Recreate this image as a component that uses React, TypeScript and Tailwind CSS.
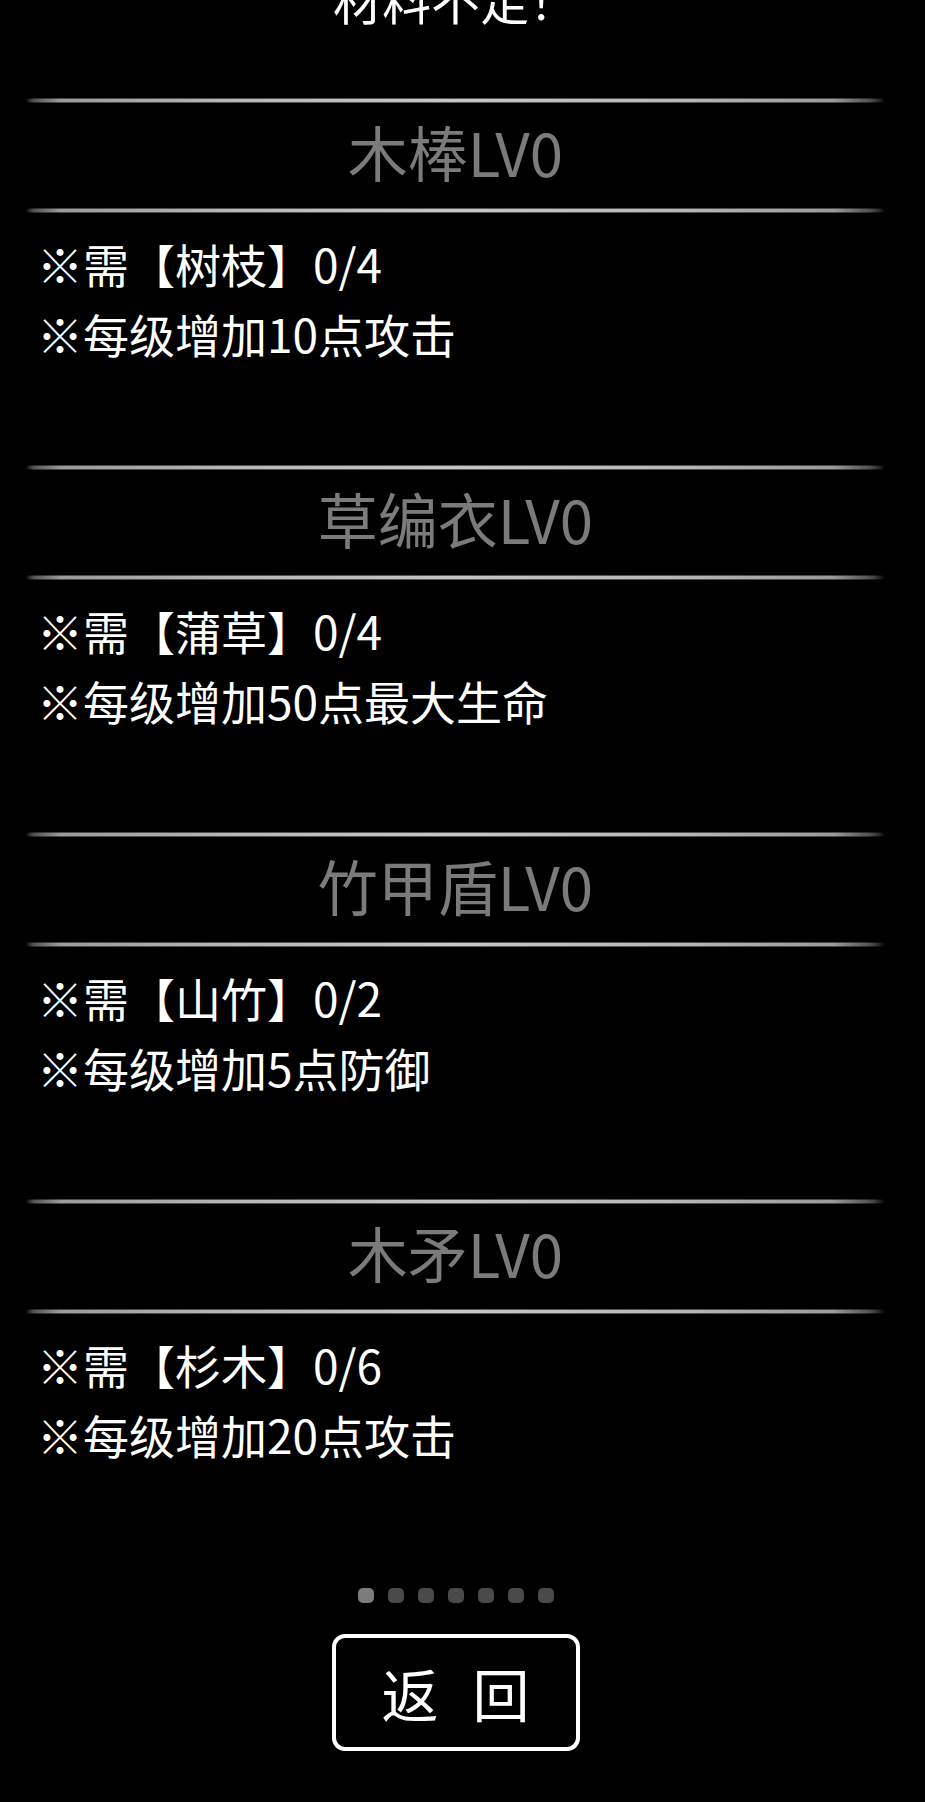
import React from 'react'

const items = [
  { name: '木棒LV0', need: '※需【树枝】0/4', effect: '※每级增加10点攻击' },
  { name: '草编衣LV0', need: '※需【蒲草】0/4', effect: '※每级增加50点最大生命' },
  { name: '竹甲盾LV0', need: '※需【山竹】0/2', effect: '※每级增加5点防御' },
  { name: '木矛LV0', need: '※需【杉木】0/6', effect: '※每级增加20点攻击' }
]

// soft edge glow + bright core, both fading out at the ends
const Divider = () => (
  <div className="-mx-[6px] h-[5px] -my-[1px] bg-[linear-gradient(to_right,transparent_0%,#2a2a2a_1%,#4a4a4a_4%,#5a5a5a_50%,#4a4a4a_94%,#2a2a2a_98%,transparent_100%)]">
    <div className="mt-[1px] h-[3px] bg-[linear-gradient(to_right,transparent_0%,#555_1%,#9a9a9a_4%,#b8b8b8_25%,#c6c6c6_50%,#b8b8b8_75%,#9a9a9a_94%,#555_98%,transparent_100%)]" />
  </div>
)

export default function App() {
  return (
    <div
      className="min-h-[1802px] w-full overflow-hidden bg-black pl-[32px] pr-[46px] text-white"
      style={{ fontFamily: '"Noto Sans CJK SC", "Noto Sans", sans-serif' }}
    >
      {/* title, cut off at the top */}
      <div className="flex h-[99px] flex-col">
        <p className="-mt-[26px] text-center text-[49px] leading-[49px]">材料不足！</p>
      </div>

      {items.map((item) => (
        <div key={item.name} className="flex h-[367px] flex-col">
          <Divider />
          <div className="h-[107px] pt-[19px] text-center text-[60px] leading-[60px] text-[#7b7b7b]">{item.name}</div>
          <Divider />
          <div className="pl-[5px] pt-[16px] text-[46px] leading-[70px]">
            <p>{item.need}</p>
            <p>{item.effect}</p>
          </div>
        </div>
      ))}

      {/* page dots */}
      <div className="mt-[21px] flex justify-center gap-[14px]">
        {[0, 1, 2, 3, 4, 5, 6].map((i) => (
          <div key={i} className={`h-[15px] w-[16px] rounded-[5px] ${i === 0 ? 'bg-[#7c7c7c]' : 'bg-[#4a4a4a]'}`} />
        ))}
      </div>

      <div className="mt-[31px] flex justify-center">
        <button className="flex h-[117px] w-[248px] items-center justify-center gap-[34px] rounded-[13px] border-[4px] border-white text-[57px] leading-none text-white">
          <span>返</span>
          <span>回</span>
        </button>
      </div>
    </div>
  )
}
